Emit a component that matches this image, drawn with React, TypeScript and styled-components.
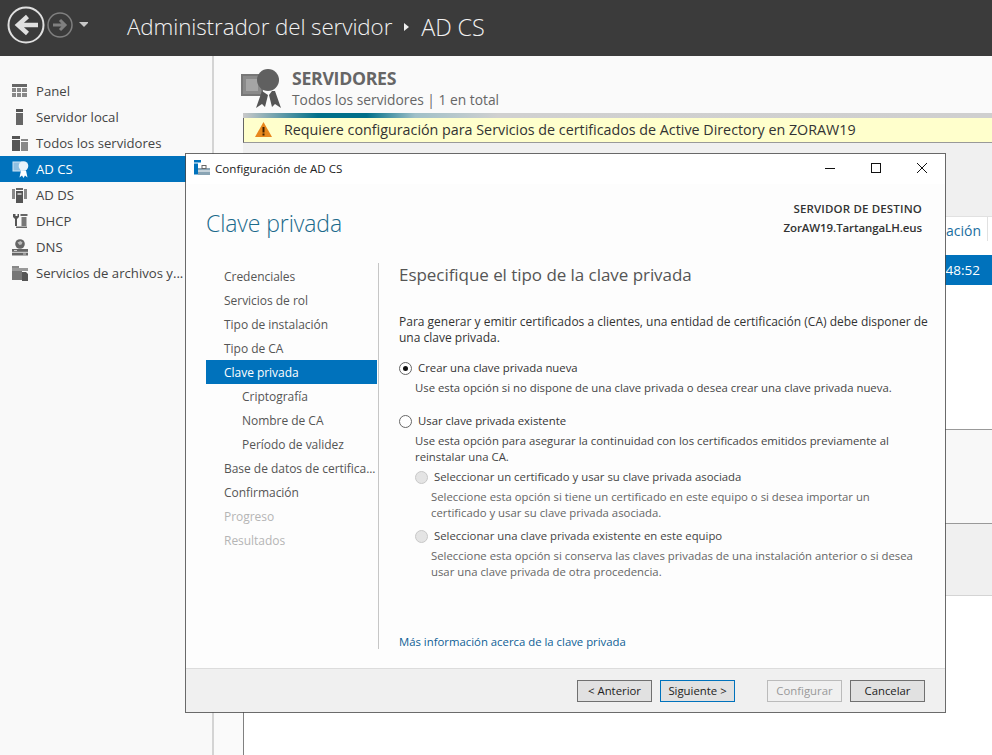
import React from "react";
import styled, { createGlobalStyle } from "styled-components";

const Global = createGlobalStyle`
  html, body { margin: 0; padding: 0; width: 992px; height: 755px; overflow: hidden; background: #fff; }
  * { box-sizing: border-box; }
  body { font-family: "Open Sans", "Noto Sans", sans-serif; }
`;
const Page = styled.div`position: relative; width: 992px; height: 755px; overflow: hidden; display: flex; flex-direction: column;`;
const Header = styled.header`height: 56px; background: #3b3b3b; display: flex; align-items: center; padding-left: 7px; flex: none;`;
const NavGlyphs = styled.svg`width: 81px; height: 40px; margin-bottom: 4px; flex: none;`;
const Title = styled.div`margin: 0 0 3px 39px; color: #f2f2f2; font-size: 22.4px; font-weight: 300; display: flex; align-items: center; gap: 12px; white-space: nowrap; letter-spacing: -0.1px;`;
const Crumb = styled.span`font-size: 23.4px;`;
const Body = styled.div`flex: 1; display: flex; min-height: 0;`;
const Sidebar = styled.nav`width: 214px; background: #f9f9f9; border-right: 2px solid #d4d4d4; padding-top: 22px; flex: none;`;
const NavRow = styled.div<{ $active?: boolean }>`height: 26px; display: flex; align-items: center; padding-left: 12px; gap: 7px; font-size: 13.15px; color: ${p => p.$active ? "#fff" : "#444"}; background: ${p => p.$active ? "#0072bc" : "transparent"}; white-space: nowrap;`;
const NavIcon = styled.svg`width: 17px; height: 17px; flex: none;`;
const Gutter = styled.div`width: 29px; background: #fafafa; flex: none;`;
const Main = styled.main`flex: 1; border-left: 1px solid #808080; display: flex; flex-direction: column; background: #fff;`;
const Content = styled.section`flex: 1; display: flex; background: #fff; position: relative; min-width: 0;`;
const Column = styled.div`width: 749px; margin-left: -1px; display: flex; flex-direction: column;`;
const ServerHead = styled.div`height: 57px; display: flex; padding-top: 12px; background: #fafafa; margin-left: -2px;`;
const HeadIcon = styled.svg`width: 42px; height: 42px; flex: none;`;
const HeadText = styled.div`margin-left: 9px; display: flex; flex-direction: column;`;
const HeadTitle = styled.div`font-size: 17.7px; font-weight: 700; color: #666; line-height: 20px; letter-spacing: -0.3px;`;
const HeadSub = styled.div`font-size: 13.8px; color: #666; line-height: 20px; margin-top: 2px;`;
const Progress = styled.div`height: 5px; background: linear-gradient(90deg, #c9c9c9 0%, #006f8a 10%, #006f8a 16.5%, #a0c0c8 23%, #d0d0d0 34%, #cfcfcf 100%);`;
const Warn = styled.div`height: 25px; background: #ffffcc; border-left: 1px solid #666; border-bottom: 1px solid #999; display: flex; align-items: center; padding: 0 0 2px 11px; gap: 12px; font-size: 14.3px; color: #333; white-space: nowrap;`;
const Grey = styled.div`height: 73px; background: #f0f0f0;`;
const TabsLine = styled.div`height: 39px; display: flex; justify-content: flex-end; border-top: 1px solid #e1e1e1; color: #1a6ea0; font-size: 14px; align-items: flex-start; padding: 4px 11px 0 0; position: relative; &::after { content: ""; position: absolute; right: 4px; top: 0; height: 24px; border-right: 1px solid #e1e1e1; }`;
const Selected = styled.div`height: 30px; background: #0072bc; color: #fff; font-size: 13.5px; display: flex; justify-content: flex-end; align-items: center; padding-right: 12px;`;
const White1 = styled.div`height: 144px;`;
const Band1 = styled.div`height: 94px; background: #f8f8f8; border-top: 1px solid #999;`;
const Band2 = styled.div`height: 73px; background: #f0f0f0; border-top: 1px solid #999; border-bottom: 1px solid #d4d4d4;`;
const Dialog = styled.div`position: absolute; left: 185px; top: 153px; width: 761px; height: 560px; background: #fdfdfd; background-clip: padding-box; border: 1px solid rgba(70,70,70,.8); display: flex; flex-direction: column;`;
const TitleBar = styled.div`height: 30px; background: #fff; display: flex; align-items: center; padding: 0 0 2px 8px; gap: 5px; font-size: 11.6px; color: #222; flex: none;`;
const Caption = styled.div`margin-left: auto; display: flex; align-items: center; height: 100%; margin-right: 14px; gap: 28px;`;
const CapIcon = styled.svg`width: 18px; height: 18px; flex: none;`;
const Top = styled.div`height: 79px; display: flex; justify-content: space-between; padding: 0 23px 0 20px; flex: none;`;
const Heading = styled.h1`margin: 24px 0 0; font-size: 23px; font-weight: 300; color: #1b6a8b; line-height: 30px; letter-spacing: -0.1px;`;
const Dest = styled.div`text-align: right; padding-top: 15px; font-size: 11.5px; color: #333; line-height: 19px; font-weight: 600; letter-spacing: -0.1px; &::first-line { letter-spacing: 0.15px; }`;
const Middle = styled.div`flex: 1; display: flex; min-height: 0;`;
const Steps = styled.div`width: 173px; margin-left: 20px; flex: none; border-right: 1px solid #c6c6c6; height: 386px; padding-top: 1px;`;
const Step = styled.div<{ $on?: boolean; $off?: boolean; $sub?: boolean }>`width: 171px; height: 24px; display: flex; align-items: center; padding-left: ${p => p.$sub ? 36 : 18}px; font-size: 12px; white-space: nowrap; overflow: hidden; letter-spacing: -0.03px; color: ${p => p.$on ? "#fff" : p.$off ? "#b5b5b5" : "#555"}; background: ${p => p.$on ? "#0072bc" : "transparent"};`;
const Pane = styled.div`flex: 1; padding: 0 0 0 20px; display: flex; flex-direction: column; height: 387px;`;
const PaneTitle = styled.h2`margin: 0; font-size: 17px; font-weight: 400; color: #555; line-height: 24px; letter-spacing: -0.05px;`;
const Intro = styled.p`margin: 27px 0 0; width: 535px; font-size: 12px; line-height: 16px; color: #333;`;
const Option = styled.div<{ $muted?: boolean; $indent?: number; $gap?: number }>`display: flex; align-items: center; gap: 6px; font-size: 11.35px; line-height: 16px; margin-left: ${p => p.$indent || 0}px; margin-top: ${p => p.$gap || 0}px; color: ${p => p.$muted ? "#444" : "#333"}; white-space: nowrap;`;
const Radio = styled.span<{ $checked?: boolean; $disabled?: boolean }>`width: 13px; height: 13px; border-radius: 50%; flex: none; border: 1px solid ${p => p.$disabled ? "#c8c8c8" : "#666"}; background: ${p => p.$disabled ? "#e4e4e4" : "#fff"}; display: flex; align-items: center; justify-content: center; &::after { content: ""; width: 5px; height: 5px; border-radius: 50%; background: ${p => p.$checked ? "#111" : "transparent"}; }`;
const Note = styled.p<{ $indent?: number; $muted?: boolean }>`margin: 4px 0 0 ${p => p.$indent || 16}px; width: 490px; font-size: 11.35px; line-height: 16px; color: ${p => p.$muted ? "#666" : "#444"};`;
const More = styled.a`margin-top: auto; font-size: 11.35px; line-height: 16px; color: #0f5f96;`;
const Footer = styled.div`height: 44px; flex: none; background: #f0f0f0; border-top: 1px solid #dcdcdc; display: flex; align-items: center; padding-left: 391px; padding-right: 20px;`;
const Btn = styled.button<{ $focus?: boolean; $off?: boolean; $gap?: number }>`width: 75px; height: 22px; margin-left: ${p => p.$gap || 0}px; padding: 0; font-family: inherit; font-size: 11.35px; background: ${p => p.$off ? "#f0f0f0" : "#e1e1e1"}; border: 1px solid ${p => p.$focus ? "#0072bc" : p.$off ? "#bbb" : "#707070"}; color: ${p => p.$off ? "#999" : "#222"};`;

const Ic = {
  Panel: () => <NavIcon viewBox="0 0 17 17"><rect x="0" y="1" width="15" height="3" fill="#666"/><path d="M0 5h4v4H0zM5 5h4v4H5zM10 5h5v4h-5zM0 10h4v4H0zM5 10h4v4H5zM10 10h5v4h-5z" fill="#888"/></NavIcon>,
  Local: () => <NavIcon viewBox="0 0 17 17"><rect x="4" y="0" width="7" height="3" fill="#555"/><rect x="4" y="4" width="7" height="12" fill="#666"/></NavIcon>,
  All: () => <NavIcon viewBox="0 0 17 17"><rect x="0" y="1" width="8" height="3" fill="#555"/><rect x="0" y="5" width="8" height="11" fill="#555"/><rect x="9" y="4" width="7" height="2" fill="#888"/><rect x="9" y="7" width="7" height="9" fill="#888"/></NavIcon>,
  Cs: () => <NavIcon viewBox="0 0 17 17"><rect x="1" y="1" width="9" height="9" fill="#8fbfe2" stroke="#cfe4f4"/><circle cx="11.500" cy="5" r="4.800" fill="#eaf3fa"/><path d="M9 9.500L7.500 16.500l2.500-2 1.500 2.500 1.500-2.500 2.500 2L14 9.500z" fill="#fff"/></NavIcon>,
  Ds: () => <NavIcon viewBox="0 0 17 17"><rect x="0" y="2" width="3" height="10" fill="#888"/><rect x="12" y="2" width="3" height="10" fill="#888"/><rect x="4" y="1" width="7" height="2" fill="#666"/><rect x="4" y="4" width="7" height="12" fill="#555"/><rect x="5.500" y="6" width="4" height="2" fill="#bbb"/></NavIcon>,
  Dhcp: () => <NavIcon viewBox="0 0 17 17"><path d="M1 1v3l2 2v7h2V6l2-2V1H5.500v2h-2V1z" fill="#555"/><rect x="8.500" y="1" width="7" height="2" fill="#666"/><rect x="9.500" y="4" width="5" height="9" fill="#777"/><rect x="4" y="13.500" width="11" height="1.500" fill="#666"/></NavIcon>,
  Dns: () => <NavIcon viewBox="0 0 17 17"><circle cx="8" cy="5" r="4.800" fill="#666"/><path d="M5.500 3.500l3-1.500 2 1.500-1 2-2 .5z" fill="#bbb"/><rect x="0" y="10" width="16" height="6.500" fill="#666"/><rect x="0" y="12.800" width="16" height="1" fill="#ddd"/><rect x="2" y="11" width="3" height="1" fill="#ccc"/><rect x="11" y="14.500" width="3" height="1" fill="#ccc"/></NavIcon>,
  Files: () => <NavIcon viewBox="0 0 17 17"><rect x="0" y="1" width="7" height="2" fill="#888"/><rect x="0" y="3" width="16" height="3" fill="#999"/><rect x="0" y="6" width="10" height="9" fill="#777"/><path d="M10 7h4l2 2v7h-6z" fill="#555"/></NavIcon>,
};

const nav: [string, keyof typeof Ic][] = [["Panel","Panel"],["Servidor local","Local"],["Todos los servidores","All"],["AD CS","Cs"],["AD DS","Ds"],["DHCP","Dhcp"],["DNS","Dns"],["Servicios de archivos y...","Files"]];

export default function App() {
  return (
    <Page>
      <Global />
      <Header>
        <NavGlyphs viewBox="0 0 81 40">
          <circle cx="19" cy="19" r="17.500" fill="none" stroke="#e0e0e0" strokeWidth="2"/>
          <path d="M31 19H12M20.500 10.500L11 19l9.500 8.500" fill="none" stroke="#e0e0e0" strokeWidth="4.500"/>
          <circle cx="53" cy="19" r="12" fill="none" stroke="#808080" strokeWidth="1.500"/>
          <path d="M46 19h11M53 14l5 5-5 5" fill="none" stroke="#808080" strokeWidth="3"/>
          <path d="M72 16h10l-5 5z" fill="#c8c8c8"/>
        </NavGlyphs>
        <Title>
          <span>Administrador del servidor</span>
          <svg width="5" height="8" viewBox="0 0 5 8"><path d="M0 0l5 4-5 4z" fill="#eee"/></svg>
          <Crumb>AD CS</Crumb>
        </Title>
      </Header>
      <Body>
        <Sidebar>
          {nav.map(([t, k]) => { const I = Ic[k]; return <NavRow key={t} $active={t === "AD CS"}><I /><span>{t}</span></NavRow>; })}
        </Sidebar>
        <Gutter />
        <Main>
          <Content>
            <Column>
              <ServerHead>
                <HeadIcon viewBox="0 0 42 42">
                  <rect x="1" y="7" width="20" height="20" fill="#8a8a8a" stroke="#777" strokeWidth="2"/>
                  <rect x="5" y="11" width="12" height="12" fill="#a5a5a5"/>
                  <circle cx="27" cy="12" r="11" fill="#606060"/>
                  <path d="M21 23l-6 17 6-4 3 3 3-12zM31 23l-3 4 3 12 3-3 6 4-6-17z" fill="#555"/>
                </HeadIcon>
                <HeadText>
                  <HeadTitle>SERVIDORES</HeadTitle>
                  <HeadSub>Todos los servidores | 1 en total</HeadSub>
                </HeadText>
              </ServerHead>
              <Progress />
              <Warn>
                <svg width="17" height="15" viewBox="0 0 17 15"><path d="M8.500 0L17 15H0z" fill="#e8871e"/><rect x="7.500" y="5" width="2" height="5.500" fill="#402000"/><rect x="7.500" y="11.500" width="2" height="2" fill="#402000"/></svg>
                Requiere configuración para Servicios de certificados de Active Directory en ZORAW19
              </Warn>
              <Grey />
              <TabsLine>ación</TabsLine>
              <Selected>48:52</Selected>
              <White1 />
              <Band1 />
              <Band2 />
            </Column>
          </Content>
        </Main>
      </Body>
      <Dialog>
        <TitleBar>
          <svg width="16" height="16" viewBox="0 0 16 16"><rect x="0" y="0" width="7" height="2.500" fill="#0072bc"/><rect x="0" y="3.500" width="4" height="11" fill="#0072bc"/><path d="M4 8h12v7H4z" fill="#8aa4b4"/><rect x="8" y="5.500" width="4" height="3" fill="none" stroke="#666"/><rect x="4" y="10.500" width="12" height="1" fill="#fff"/></svg>
          <span>Configuración de AD CS</span>
          <Caption>
            <CapIcon viewBox="0 0 18 18"><path d="M4 9.500h10" stroke="#111" strokeWidth="1"/></CapIcon>
            <CapIcon viewBox="0 0 18 18"><rect x="4.500" y="4.500" width="9" height="9" fill="none" stroke="#111"/></CapIcon>
            <CapIcon viewBox="0 0 18 18"><path d="M4 4l10 10M14 4L4 14" stroke="#111" strokeWidth="1"/></CapIcon>
          </Caption>
        </TitleBar>
        <Top>
          <Heading>Clave privada</Heading>
          <Dest>SERVIDOR DE DESTINO<br/>ZorAW19.TartangaLH.eus</Dest>
        </Top>
        <Middle>
          <Steps>
            <Step>Credenciales</Step>
            <Step>Servicios de rol</Step>
            <Step>Tipo de instalación</Step>
            <Step>Tipo de CA</Step>
            <Step $on>Clave privada</Step>
            <Step $sub>Criptografía</Step>
            <Step $sub>Nombre de CA</Step>
            <Step $sub>Período de validez</Step>
            <Step>Base de datos de certifica...</Step>
            <Step>Confirmación</Step>
            <Step $off>Progreso</Step>
            <Step $off>Resultados</Step>
          </Steps>
          <Pane>
            <PaneTitle>Especifique el tipo de la clave privada</PaneTitle>
            <Intro>Para generar y emitir certificados a clientes, una entidad de certificación (CA) debe disponer de una clave privada.</Intro>
            <Option $gap={14}><Radio $checked />Crear una clave privada nueva</Option>
            <Note>Use esta opción si no dispone de una clave privada o desea crear una clave privada nueva.</Note>
            <Option $gap={17}><Radio />Usar clave privada existente</Option>
            <Note>Use esta opción para asegurar la continuidad con los certificados emitidos previamente al reinstalar una CA.</Note>
            <Option $indent={16} $gap={4} $muted><Radio $disabled />Seleccionar un certificado y usar su clave privada asociada</Option>
            <Note $indent={32} $muted>Seleccione esta opción si tiene un certificado en este equipo o si desea importar un certificado y usar su clave privada asociada.</Note>
            <Option $indent={16} $gap={7} $muted><Radio $disabled />Seleccionar una clave privada existente en este equipo</Option>
            <Note $indent={32} $muted>Seleccione esta opción si conserva las claves privadas de una instalación anterior o si desea usar una clave privada de otra procedencia.</Note>
            <More>Más información acerca de la clave privada</More>
          </Pane>
        </Middle>
        <Footer>
          <Btn>&lt; Anterior</Btn>
          <Btn $focus $gap={8}>Siguiente &gt;</Btn>
          <Btn $off $gap={32}>Configurar</Btn>
          <Btn $gap={8}>Cancelar</Btn>
        </Footer>
      </Dialog>
    </Page>
  );
}
